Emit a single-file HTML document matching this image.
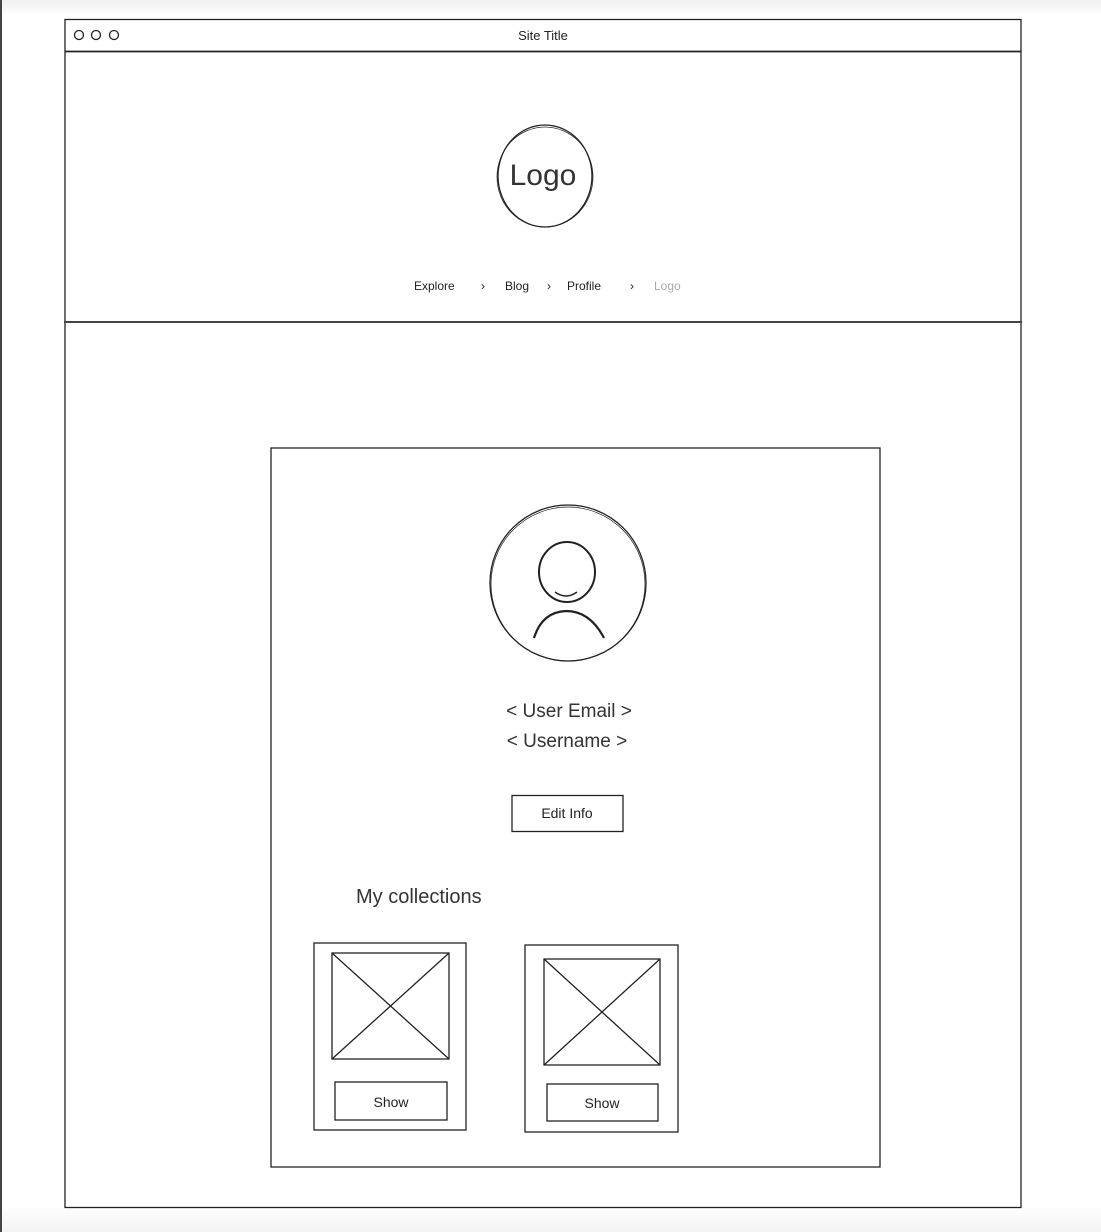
<!DOCTYPE html>
<html><head><meta charset="utf-8"><style>
html,body{margin:0;padding:0;width:1101px;height:1232px;overflow:hidden;background:#fff}
svg{display:block}
text{font-family:"Liberation Sans",sans-serif}
</style></head><body>
<svg width="1101" height="1232" viewBox="0 0 1101 1232">
<defs>
<linearGradient id="tg" x1="0" y1="0" x2="0" y2="1"><stop offset="0" stop-color="#f0f0f0"/><stop offset="1" stop-color="#fff"/></linearGradient>
<linearGradient id="bg" x1="0" y1="0" x2="0" y2="1"><stop offset="0" stop-color="#fff"/><stop offset="1" stop-color="#f3f3f3"/></linearGradient>
</defs>
<rect x="0" y="0" width="1101" height="16" fill="url(#tg)"/>
<rect x="0" y="1206" width="1101" height="26" fill="url(#bg)"/>
<rect x="0" y="0" width="2" height="1232" fill="#444"/>
<g fill="none" stroke="#222" stroke-width="1.3">
<rect x="65" y="19.5" width="956" height="1188"/>
<line x1="65" y1="51.5" x2="1021" y2="51.5" stroke-width="1.8"/>
<line x1="64" y1="322" x2="1022" y2="322" stroke-width="2" stroke="#444"/>
<circle cx="79" cy="35" r="4.5"/><circle cx="96" cy="35" r="4.5"/><circle cx="114" cy="35" r="4.5"/>
<ellipse cx="545" cy="176" rx="47" ry="51"/>
<ellipse cx="545" cy="177" rx="48" ry="50" stroke-width="0.7"/>
<rect x="271" y="448" width="609" height="719"/>
<circle cx="568" cy="583" r="78"/>
<circle cx="568" cy="584" r="77" stroke-width="0.7"/>
<ellipse cx="567" cy="572" rx="28" ry="30" stroke-width="2"/>
<path d="M555 592 Q566 600 577 592" stroke-width="1.5"/>
<path d="M534 638 Q542 612 566 611 Q590 611 604 638" stroke-width="2.2"/>
<rect x="512" y="795.5" width="111" height="36"/>
<rect x="314" y="943" width="152" height="187"/>
<rect x="332" y="953" width="117" height="106"/>
<path d="M332 953 L449 1059 M449 953 L332 1059"/>
<rect x="335" y="1082" width="112" height="38"/>
<rect x="525" y="945" width="153" height="187"/>
<rect x="544" y="959" width="116" height="106"/>
<path d="M544 959 L660 1065 M660 959 L544 1065"/>
<rect x="547" y="1084" width="111" height="37"/>
</g>
<g style="fill:#222">
<text x="543" y="40" font-size="13" text-anchor="middle">Site Title</text>
<text x="543" y="185" font-size="30" text-anchor="middle" style="fill:#333">Logo</text>
<g font-size="12">
<text x="414" y="290">Explore</text>
<text x="481" y="290">›</text>
<text x="505" y="290">Blog</text>
<text x="547" y="290">›</text>
<text x="567" y="290">Profile</text>
<text x="630" y="290">›</text>
<text x="654" y="290" style="fill:#aaa">Logo</text>
</g>
<text x="569" y="717" font-size="19" text-anchor="middle" style="fill:#333">&lt; User Email &gt;</text>
<text x="567" y="747" font-size="19" text-anchor="middle" style="fill:#333">&lt; Username &gt;</text>
<text x="567" y="818" font-size="14" text-anchor="middle">Edit Info</text>
<text x="356" y="903" font-size="20" style="fill:#333">My collections</text>
<text x="391" y="1107" font-size="14" text-anchor="middle">Show</text>
<text x="602" y="1108" font-size="14" text-anchor="middle">Show</text>
</g>
</svg>
</body></html>
